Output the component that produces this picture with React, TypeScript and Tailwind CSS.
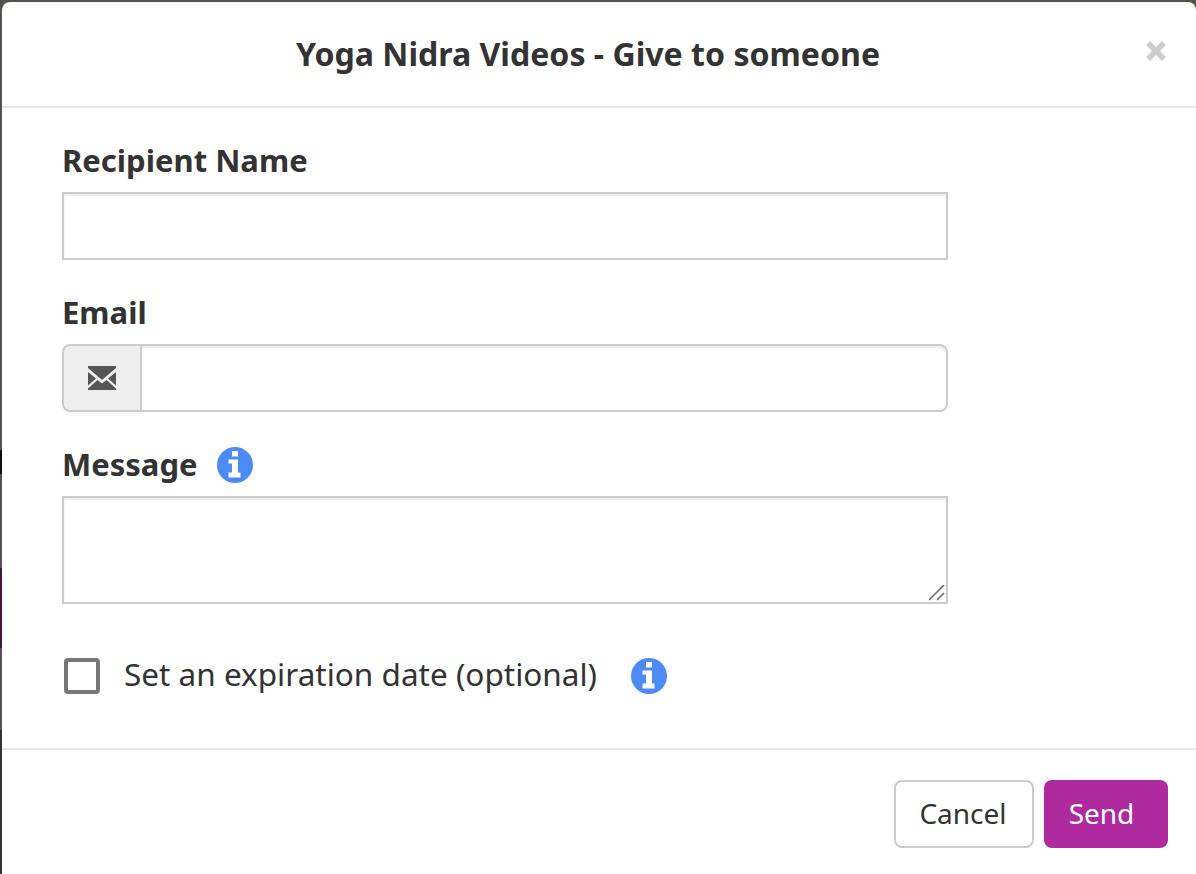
const inputClass =
  'block w-full border-2 border-[#ccc] bg-white shadow-[inset_0_2px_2px_rgba(0,0,0,0.075)] outline-none';

const labelClass = 'block h-[50px] text-[31px] font-bold leading-[36px] text-[#333]';

function MailIcon() {
  return (
    <svg viewBox="0 0 28 24" className="h-[24px] w-[28px] fill-[#555]">
      <path d="M0 0H28V2L14 14L0 2Z" />
      <path d="M0 6L8 12.5L0 19.5Z" />
      <path d="M28 6L20 12.5L28 19.5Z" />
      <path d="M0 24V22.5L9.5 14L14 17.5L18.5 14L28 22.5V24Z" />
    </svg>
  );
}

function InfoIcon({ className }: { className: string }) {
  return (
    <svg viewBox="0 0 36 36" className={`h-[36px] w-[36px] shrink-0 ${className}`}>
      <circle cx="18" cy="18" r="18" fill="#4c8bf5" />
      <path fill="#fff" d="M15 4H21V9.5H15ZM11.5 12.5H21V25.5H23.5V30.5H11.5V25.5H15V16.5H11.5Z" />
    </svg>
  );
}

export default function App() {
  return (
    <div className="relative h-[874px] w-[1196px] overflow-hidden bg-[#53534d] font-['Noto_Sans',sans-serif]">
      {/* bits of the page behind the overlay, only a sliver shows on the left */}
      <div className="absolute left-0 top-[450px] h-[24px] w-[2px] bg-[#111]" />
      <div className="absolute left-0 top-[568px] h-[80px] w-[2px] bg-[#4a1146]" />
      <div className="absolute left-0 top-[730px] h-[144px] w-[2px] bg-[#333]" />

      <div className="relative ml-[2px] mt-[2px] flex h-[872px] w-[1194px] flex-col rounded-t-[8px] bg-white">
        <header className="relative flex h-[106px] shrink-0 items-center justify-center border-b-2 border-[#e5e5e5] pr-[22px]">
          <h3 className="text-[32.1px] font-bold leading-[40px] text-[#333]">Yoga Nidra Videos - Give to someone</h3>
          <button className="absolute right-[30px] top-[39px]">
            <svg viewBox="0 0 20 20" className="h-[20px] w-[20px] stroke-[#ccc]" strokeWidth="5.5">
              <path d="M2 2L18 18M18 2L2 18" />
            </svg>
          </button>
        </header>

        <form className="h-[640px] shrink-0 px-[60px] pt-[34px]">
          <div className="w-[886px]">
            <label className={labelClass}>Recipient Name</label>
            <input type="text" className={`${inputClass} h-[68px]`} />

            <label className={`${labelClass} mt-[34px]`}>Email</label>
            <div className="flex h-[68px]">
              <span className="flex w-[78px] items-center justify-center rounded-l-[8px] border-2 border-r-0 border-[#ccc] bg-[#eee]">
                <MailIcon />
              </span>
              <input type="text" className={`${inputClass} h-[68px] flex-1 rounded-r-[8px]`} />
            </div>

            <label className={`${labelClass} mt-[34px] flex items-start gap-[19px]`}>
              Message
              <InfoIcon className="mt-[1px]" />
            </label>
            <div className="relative h-[108px]">
              <textarea className={`${inputClass} h-[108px] resize-none`} />
              <svg viewBox="0 0 16 16" className="absolute bottom-[3px] right-[3px] h-[16px] w-[16px] stroke-[#666]" strokeWidth="1.5">
                <path d="M0 15L15 0M8 15L15 8" />
              </svg>
            </div>

            <div className="ml-[2px] mt-[54px] flex h-[36px] items-center">
              <span className="h-[36px] w-[36px] shrink-0 rounded-[4px] border-[4px] border-[#777] bg-white" />
              <span className="ml-[24px] -mt-[4px] whitespace-nowrap text-[31.5px] leading-[36px] text-[#333]">Set an expiration date (optional)</span>
              <InfoIcon className="ml-[34px] -mt-[1px]" />
            </div>
          </div>
        </form>

        <footer className="flex flex-1 justify-end gap-[10px] border-t-2 border-[#e5e5e5] pr-[28px] pt-[30px]">
          <button className="h-[68px] w-[140px] rounded-[8px] border-2 border-[#ccc] bg-white pb-[2px] pr-[2px] text-[28px] text-[#333]">Cancel</button>
          <button className="h-[68px] w-[124px] rounded-[8px] bg-[#ae2a9e] pb-[2px] pr-[9px] text-[28px] text-white">Send</button>
        </footer>
      </div>
    </div>
  );
}
